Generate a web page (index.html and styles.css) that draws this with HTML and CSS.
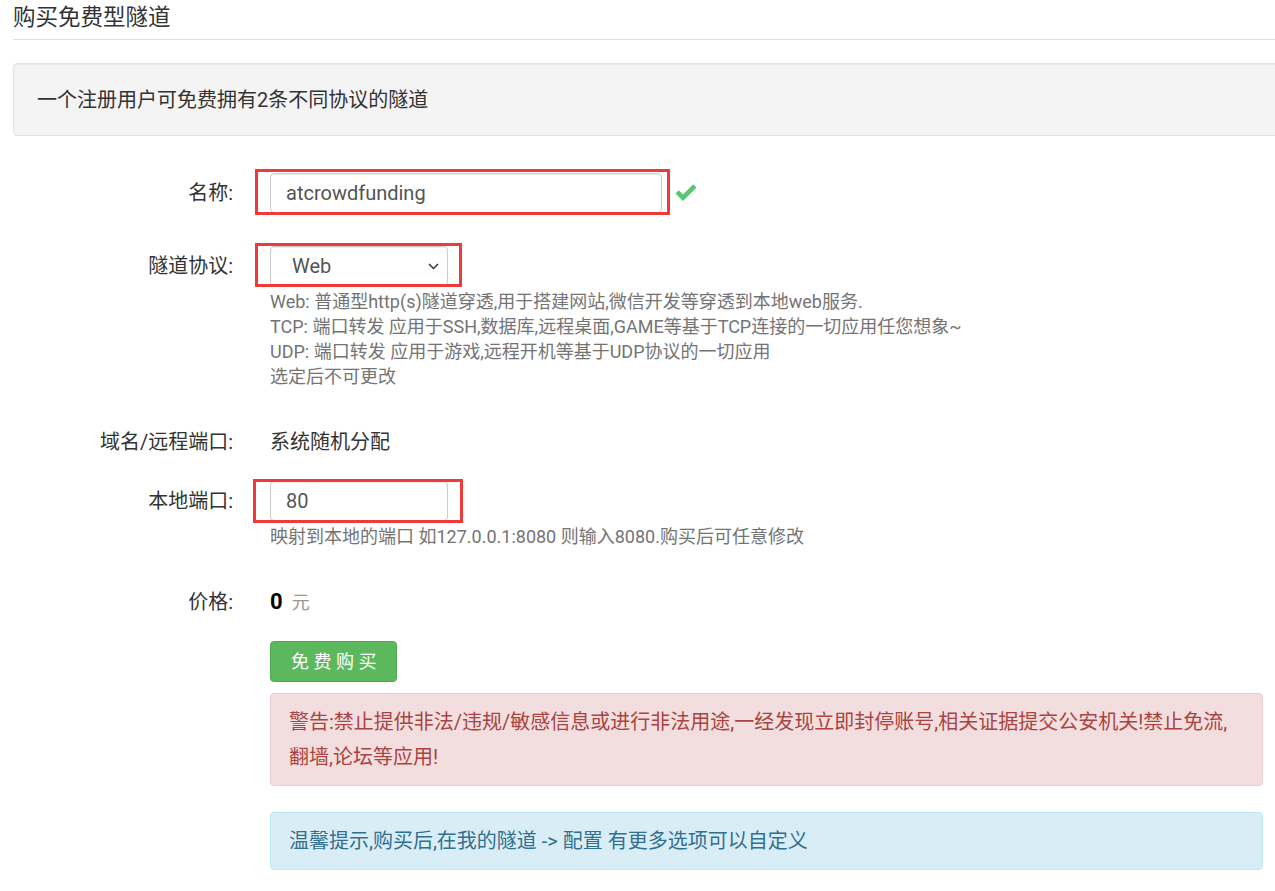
FILE: index.html
```html
<!DOCTYPE html>
<html lang="zh-CN">
<head>
<meta charset="utf-8">
<title>购买免费型隧道</title>
<link rel="stylesheet" href="styles.css">
</head>
<body>
<div class="page">
  <h3 class="title">购买免费型隧道</h3>
  <hr class="rule">
  <div class="well">一个注册用户可免费拥有2条不同协议的隧道</div>

  <form class="form">
    <div class="row row-name">
      <label class="label">名称:</label>
      <div class="control">
        <div class="inline">
          <span class="mark mark-name"><input class="input input-name" type="text" value="atcrowdfunding"></span>
          <svg class="check" width="22" height="18" viewBox="0 0 22 18" aria-hidden="true">
            <path d="M0.5 9.5 L3.8 6.2 L8 10.4 L18.2 0.2 L21.5 3.5 L8 17 Z" fill="#56c873"/>
          </svg>
        </div>
      </div>
    </div>

    <div class="row row-proto">
      <label class="label">隧道协议:</label>
      <div class="control">
        <span class="mark mark-proto">
          <span class="select">
            <span class="select-text">Web</span>
            <svg class="chev" width="11" height="7" viewBox="0 0 11 7" aria-hidden="true">
              <path d="M1 1 L5.5 5.5 L10 1" fill="none" stroke="#333" stroke-width="1.5"/>
            </svg>
          </span>
        </span>
        <div class="help">
          <div>Web: 普通型http(s)隧道穿透,用于搭建网站,微信开发等穿透到本地web服务.</div>
          <div>TCP: 端口转发 应用于SSH,数据库,远程桌面,GAME等基于TCP连接的一切应用任您想象~</div>
          <div>UDP: 端口转发 应用于游戏,远程开机等基于UDP协议的一切应用</div>
          <div>选定后不可更改</div>
        </div>
      </div>
    </div>

    <div class="row row-domain">
      <label class="label">域名/远程端口:</label>
      <div class="control static">系统随机分配</div>
    </div>

    <div class="row row-port">
      <label class="label">本地端口:</label>
      <div class="control">
        <span class="mark mark-port"><input class="input input-port" type="text" value="80"></span>
        <div class="help">映射到本地的端口 如127.0.0.1:8080 则输入8080.购买后可任意修改</div>
      </div>
    </div>

    <div class="row row-price">
      <label class="label">价格:</label>
      <div class="control static"><span class="price">0</span><span class="unit">元</span></div>
    </div>

    <div class="row row-actions">
      <div></div>
      <div class="control">
        <button class="btn" type="button">免 费 购 买</button>
        <div class="alert alert-danger">警告:禁止提供非法/违规/敏感信息或进行非法用途,一经发现立即封停账号,相关证据提交公安机关!禁止免流,翻墙,论坛等应用!</div>
        <div class="alert alert-info">温馨提示,购买后,在我的隧道 -&gt; 配置 有更多选项可以自定义</div>
      </div>
    </div>
  </form>
</div>
</body>
</html>
```

FILE: styles.css
```css
html, body {
  margin: 0;
  padding: 0;
  background: #fff;
  overflow: hidden;
}

body {
  font-family: Roboto, "Noto Sans CJK SC", sans-serif;
  color: #333;
  font-size: 20px;
}

.page {
  padding: 0 12px 0 13px;
}

.title {
  margin: 0;
  font-size: 22.5px;
  font-weight: normal;
  line-height: 34px;
  color: #333;
}

.rule {
  margin: 5px -20px 0 0;
  border: 0;
  border-top: 1px solid #dedede;
  height: 0;
}

.well {
  margin: 23px -20px 0 0;
  padding: 22px 23px 20px;
  line-height: 29px;
  font-size: 20px;
  background: #f4f4f4;
  border: 1px solid #e3e3e3;
  border-radius: 4px;
  box-shadow: inset 0 1px 1px rgba(0, 0, 0, .05);
  color: #333;
}

.form {
  margin-top: 37px;
}

.row {
  display: grid;
  grid-template-columns: 220px 1fr;
  column-gap: 37px;
}

.label {
  text-align: right;
  line-height: 40px;
  font-size: 20px;
  color: #333;
}

.row-name { margin-bottom: 33px; }
.row-proto { margin-bottom: 33px; }
.row-domain { margin-bottom: 19px; }
.row-port { margin-bottom: 33px; }
.row-price { margin-bottom: 18px; }

.static {
  line-height: 40px;
  font-size: 20px;
  color: #333;
}

.inline {
  display: flex;
  align-items: center;
}

.mark {
  position: relative;
  display: inline-block;
  vertical-align: top;
}

.mark::after {
  content: "";
  position: absolute;
  border: 3px solid #ef3a3a;
  pointer-events: none;
}

.mark-name::after { left: -15px; right: -8px; top: -4px; bottom: -2px; }
.mark-proto::after { left: -15px; right: -14px; top: -3px; bottom: -1px; }
.mark-port::after { left: -17px; right: -15px; top: -2px; bottom: -2px; }

.input {
  display: block;
  box-sizing: border-box;
  height: 40px;
  margin: 0;
  padding: 0 15px;
  font-family: Roboto, "Noto Sans CJK SC", sans-serif;
  font-size: 20px;
  color: #555;
  background: #fff;
  border: 1px solid #ccc;
  border-radius: 4px;
  box-shadow: inset 0 1px 1px rgba(0, 0, 0, .075);
  outline: none;
}

.input-name { width: 392px; }
.input-port { width: 178px; }

.check {
  display: block;
  margin-left: 13px;
}

.select {
  display: flex;
  align-items: center;
  justify-content: space-between;
  box-sizing: border-box;
  width: 178px;
  height: 40px;
  padding: 0 8px 0 21px;
  font-size: 20px;
  color: #555;
  background: #fff;
  border: 1px solid #ccc;
  border-radius: 4px;
  box-shadow: inset 0 1px 1px rgba(0, 0, 0, .075);
}

.chev {
  display: block;
}

.help {
  margin-top: 3px;
  font-size: 18px;
  line-height: 25px;
  color: #747474;
}

.price {
  font-size: 22px;
  font-weight: bold;
  color: #000;
}

.unit {
  margin-left: 9px;
  font-size: 18px;
  color: #999;
}

.btn {
  display: block;
  height: 41px;
  margin: 0 0 11px;
  padding: 0 20px;
  font-family: Roboto, "Noto Sans CJK SC", sans-serif;
  font-size: 18px;
  line-height: 39px;
  color: #fff;
  background: #5cb85c;
  border: 1px solid #4cae4c;
  border-radius: 4px;
}

.alert {
  padding: 11px 17px 10px 18px;
  font-size: 20px;
  line-height: 35px;
  border: 1px solid transparent;
  border-radius: 4px;
}

.alert-danger {
  margin-bottom: 26px;
  color: #a94442;
  background: #f2dede;
  border-color: #ebccd1;
}

.alert-info {
  color: #31708f;
  background: #d9edf7;
  border-color: #bce8f1;
}
```
